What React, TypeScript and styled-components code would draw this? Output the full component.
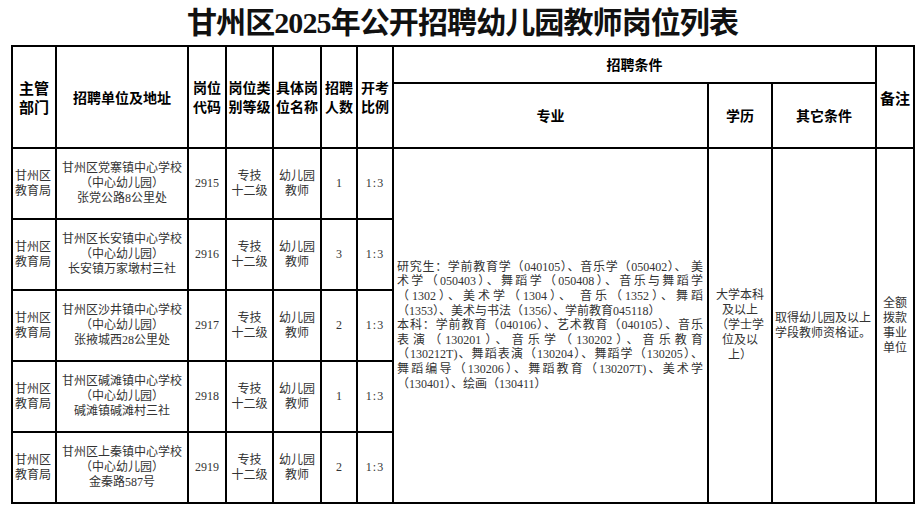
import styled, { createGlobalStyle } from "styled-components";

const GlobalStyle = createGlobalStyle`
  html, body {
    margin: 0;
    padding: 0;
    background: #fff;
  }
  body {
    font-family: "Liberation Serif", "Noto Sans CJK SC", serif;
  }
`;

const schools = [
  { name: "甘州区党寨镇中心学校", addr: "张党公路8公里处", code: "2915", count: "1" },
  { name: "甘州区长安镇中心学校", addr: "长安镇万家墩村三社", code: "2916", count: "3" },
  { name: "甘州区沙井镇中心学校", addr: "张掖城西28公里处", code: "2917", count: "2" },
  { name: "甘州区碱滩镇中心学校", addr: "碱滩镇碱滩村三社", code: "2918", count: "1" },
  { name: "甘州区上秦镇中心学校", addr: "金秦路587号", code: "2919", count: "2" },
];

const majorLines = [
  { text: "研究生：学前教育学（040105）、音乐学（050402）、 美", last: false },
  { text: "术学（050403）、舞蹈学（050408）、音乐与舞蹈学", last: false },
  { text: "（1302）、美术学（1304）、 音乐（1352）、舞蹈", last: false },
  { text: "（1353）、美术与书法（1356）、学前教育045118）", last: true },
  { text: "本科：学前教育（040106）、艺术教育（040105）、音乐", last: false },
  { text: "表演（130201）、音乐学（130202）、音乐教育", last: false },
  { text: "（130212T)、舞蹈表演（130204）、舞蹈学（130205）、", last: false },
  { text: "舞蹈编导（130206）、舞蹈教育（130207T)、美术学", last: false },
  { text: "（130401）、绘画（130411）", last: true },
];

const App = () => {
  return (
    <Page>
      <GlobalStyle />
      <Title>甘州区2025年公开招聘幼儿园教师岗位列表</Title>
      <Sheet>
        <colgroup>
          <col style={{ width: 44 }} />
          <col style={{ width: 132 }} />
          <col style={{ width: 38 }} />
          <col style={{ width: 47 }} />
          <col style={{ width: 48 }} />
          <col style={{ width: 36 }} />
          <col style={{ width: 36 }} />
          <col style={{ width: 315 }} />
          <col style={{ width: 64 }} />
          <col style={{ width: 104 }} />
          <col style={{ width: 38 }} />
        </colgroup>
        <thead>
          <HeadRow $height={37}>
            <HeadCell rowSpan={2} $size={15}>主管<br />部门</HeadCell>
            <HeadCell rowSpan={2}>招聘单位及地址</HeadCell>
            <HeadCell rowSpan={2}>岗位<br />代码</HeadCell>
            <HeadCell rowSpan={2}>岗位类<br />别等级</HeadCell>
            <HeadCell rowSpan={2}>具体岗<br />位名称</HeadCell>
            <HeadCell rowSpan={2}>招聘<br />人数</HeadCell>
            <HeadCell rowSpan={2}>开考<br />比例</HeadCell>
            <HeadCell colSpan={3}>招聘条件</HeadCell>
            <HeadCell rowSpan={2} $size={15}>备注</HeadCell>
          </HeadRow>
          <HeadRow $height={65}>
            <HeadCell>专业</HeadCell>
            <HeadCell>学历</HeadCell>
            <HeadCell>其它条件</HeadCell>
          </HeadRow>
        </thead>
        <tbody>
          {schools.map((s, i) => (
            <BodyRow key={s.code}>
              <Cell $align="left">甘州区<br />教育局</Cell>
              <Cell>
                {s.name}
                <br />（中心幼儿园）
                <br />
                {s.addr}
              </Cell>
              <Cell>{s.code}</Cell>
              <Cell>专技<br />十二级</Cell>
              <Cell>幼儿园<br />教师</Cell>
              <Cell>{s.count}</Cell>
              <Cell $spacing={1}>1:3</Cell>
              {i === 0 && (
                <>
                  <MajorCell rowSpan={5}>
                    {majorLines.map((l) => (
                      <MajorLine key={l.text} $last={l.last}>
                        {l.text}
                      </MajorLine>
                    ))}
                  </MajorCell>
                  <Cell rowSpan={5}>
                    大学本科
                    <br />及以上
                    <br />（学士学
                    <br />位及以
                    <br />上）
                  </Cell>
                  <Cell rowSpan={5} $align="left">
                    取得幼儿园及以上
                    <br />学段教师资格证。
                  </Cell>
                  <Cell rowSpan={5}>
                    全额
                    <br />拨款
                    <br />事业
                    <br />单位
                  </Cell>
                </>
              )}
            </BodyRow>
          ))}
        </tbody>
      </Sheet>
    </Page>
  );
};

const Page = styled.div`
  width: 918px;
  height: 510px;
  padding: 4px 0 0 11px;
  box-sizing: border-box;
  overflow: hidden;
`;

const Title = styled.h1`
  margin: 0;
  width: 903px;
  height: 41px;
  line-height: 38px;
  text-align: center;
  font-size: 30px;
  font-weight: bold;
  color: #111;
  letter-spacing: -0.9px;
`;

const Sheet = styled.table`
  width: 903px;
  table-layout: fixed;
  border-collapse: collapse;
  border: 2.5px solid #000;
`;

const HeadRow = styled.tr<{ $height: number }>`
  height: ${(p) => p.$height}px;
`;

const BodyRow = styled.tr`
  height: 71px;
`;

const HeadCell = styled.th<{ $size?: number }>`
  border: 2.5px solid #000;
  padding: 0;
  font-size: ${(p) => p.$size ?? 14}px;
  line-height: 19px;
  font-weight: bold;
  color: #000;
  text-align: center;
  vertical-align: middle;
  white-space: nowrap;
  font-family: "Noto Sans CJK SC", sans-serif;
`;

const Cell = styled.td<{ $align?: string; $spacing?: number }>`
  border: 2.5px solid #000;
  padding: 0 2px;
  font-size: 12px;
  line-height: 15px;
  color: #333;
  text-align: ${(p) => p.$align ?? "center"};
  letter-spacing: ${(p) => p.$spacing ?? 0}px;
  vertical-align: middle;
  white-space: nowrap;
`;

const MajorCell = styled.td`
  border: 2.5px solid #000;
  padding: 0 4px 0 3px;
  font-size: 12px;
  line-height: 14.6px;
  color: #333;
  vertical-align: middle;
`;

const MajorLine = styled.div<{ $last: boolean }>`
  white-space: nowrap;
  text-align: ${(p) => (p.$last ? "left" : "justify")};
  text-align-last: ${(p) => (p.$last ? "left" : "justify")};
`;

export default App;
